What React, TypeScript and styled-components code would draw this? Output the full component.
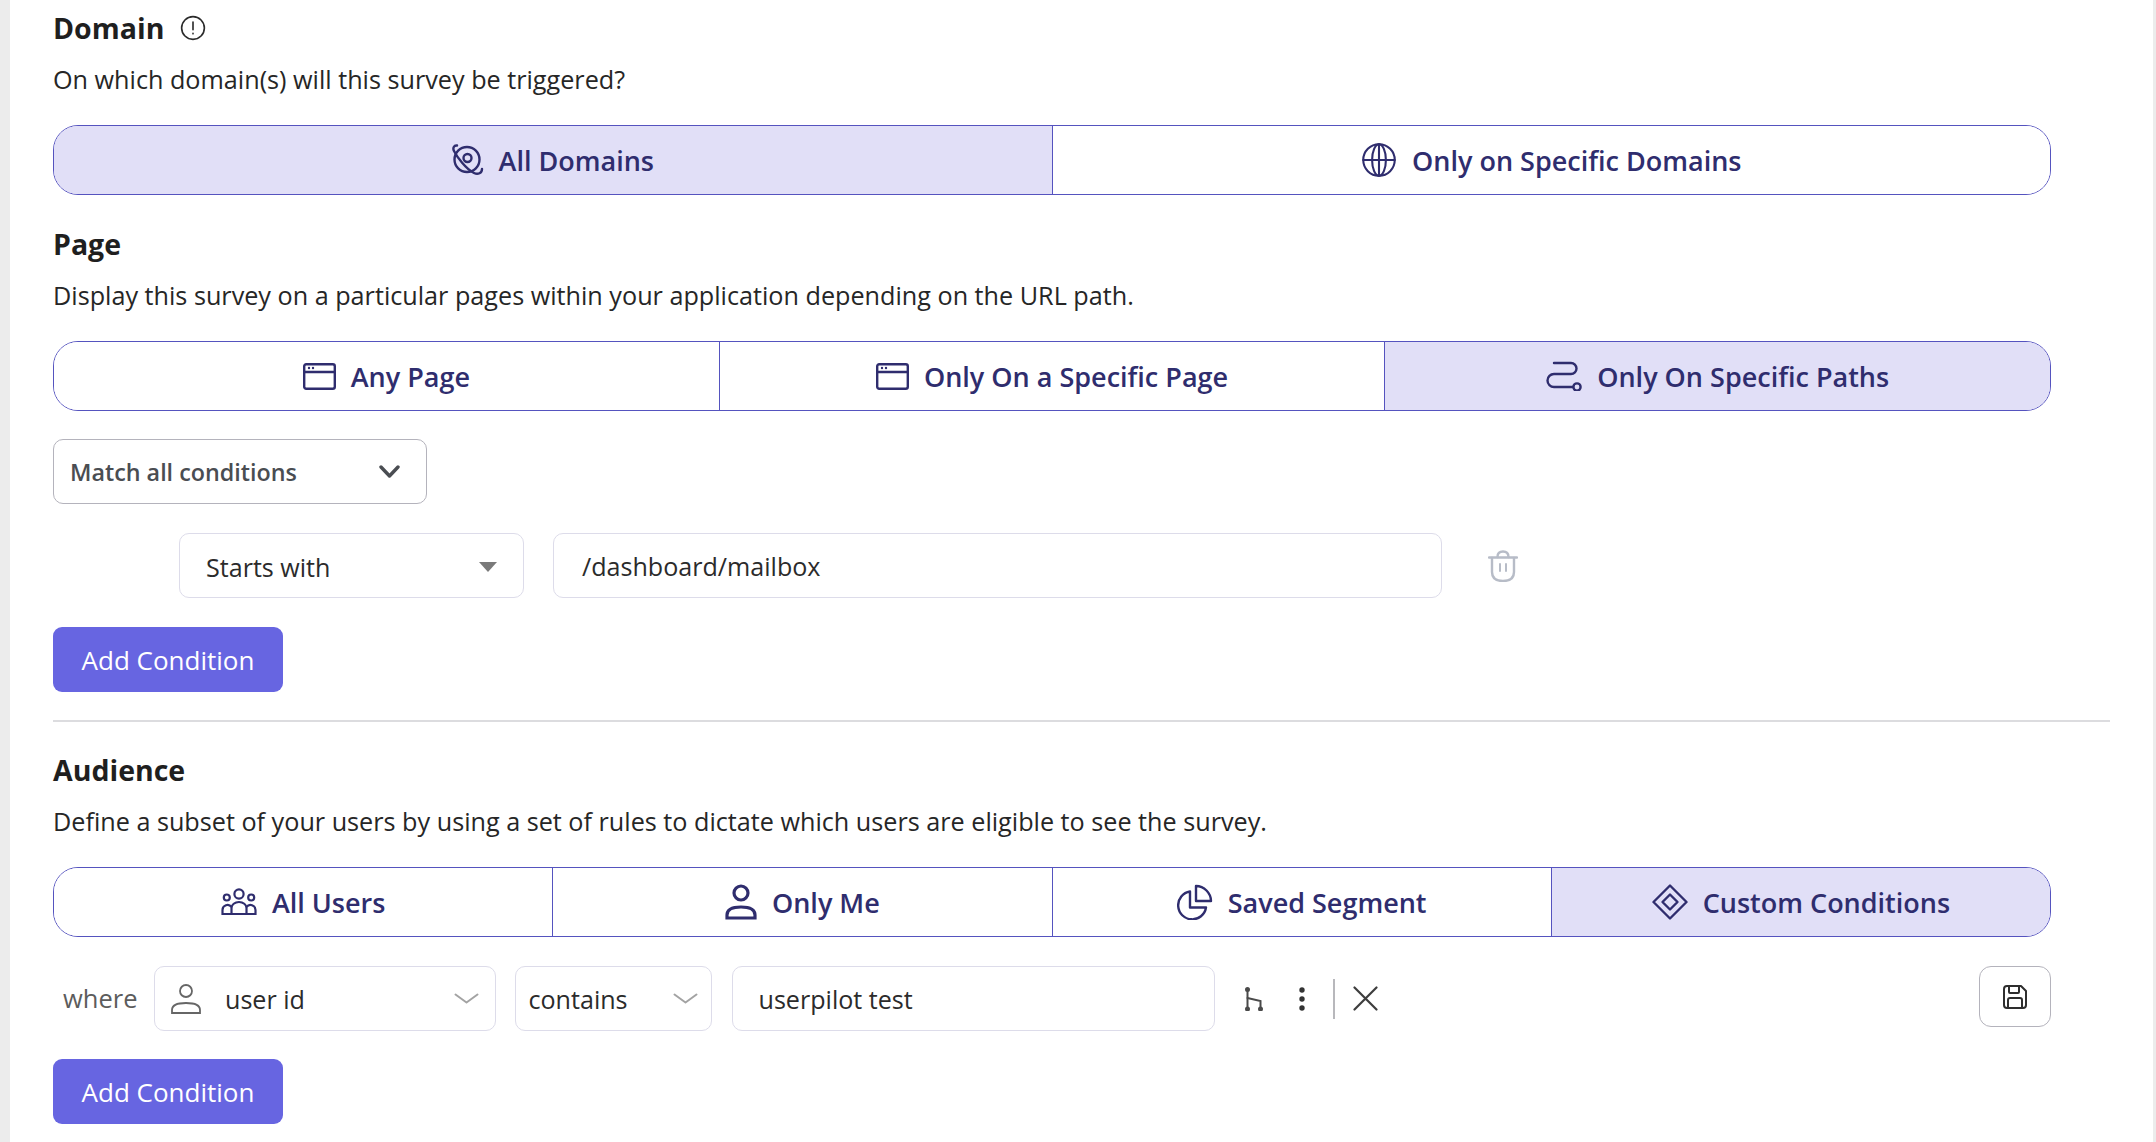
import React from "react";
import styled, { createGlobalStyle } from "styled-components";

const GlobalStyle = createGlobalStyle`
  html, body {
    margin: 0;
    padding: 0;
    background: #fff;
    font-family: "Open Sans", "Liberation Sans", sans-serif;
  }
`;

const NAVY = "#2f2d6e";

const Page = styled.div`
  width: 2156px;
  height: 1142px;
  overflow: hidden;
  box-sizing: border-box;
  background: #fff;
  border-left: 10px solid #ececec;
  border-right: 3px solid #ececec;
  padding: 8px 33px 0 43px;
`;

const Section = styled.section`
  width: 2057px;
  display: flex;
  flex-direction: column;
  align-items: flex-start;
`;

const TitleRow = styled.div`
  display: flex;
  align-items: center;
  gap: 16px;
  height: 40px;
`;

const Title = styled.h2`
  margin: 0;
  font-size: 28.5px;
  line-height: 40px;
  font-weight: 700;
  color: #1f1f1f;
`;

const Description = styled.p`
  margin: 13px 0 28px;
  font-size: 25.2px;
  line-height: 36px;
  font-weight: 400;
  color: #262626;
`;

const SegmentGroup = styled.div`
  width: 1998px;
  height: 70px;
  box-sizing: border-box;
  display: flex;
  border: 1.5px solid #5553bf;
  border-radius: 25px;
  overflow: hidden;
  margin-bottom: 29px;
`;

const Segment = styled.div<{ $active?: boolean }>`
  flex: 1 1 0;
  display: flex;
  align-items: center;
  justify-content: center;
  gap: 15px;
  font-size: 27px;
  font-weight: 600;
  color: ${NAVY};
  background: ${(p) => (p.$active ? "#e1dff7" : "#fff")};
  & + & {
    border-left: 1.5px solid #5553bf;
  }
`;

const MatchSelect = styled.div`
  width: 374px;
  height: 65px;
  box-sizing: border-box;
  margin: -1px 0 29px;
  padding: 0 26px 0 16px;
  display: flex;
  align-items: center;
  justify-content: space-between;
  border: 1.5px solid #b4b3bc;
  border-radius: 10px;
  font-size: 23.3px;
  font-weight: 600;
  color: #4a4d52;
`;

const ConditionRow = styled.div<{ $indent?: number; $bottom: number }>`
  width: 1998px;
  display: flex;
  align-items: flex-start;
  margin-left: ${(p) => p.$indent ?? 0}px;
  margin-bottom: ${(p) => p.$bottom}px;
`;

const Field = styled.div<{ $width: number; $gap?: number; $pad?: number; $drop?: number }>`
  width: ${(p) => p.$width}px;
  height: 65px;
  flex: none;
  box-sizing: border-box;
  margin-right: ${(p) => p.$gap ?? 0}px;
  padding: ${(p) => p.$drop ?? 0}px ${(p) => p.$pad ?? 26}px 0;
  display: flex;
  align-items: center;
  justify-content: space-between;
  border: 1.5px solid #dddcea;
  border-radius: 10px;
  font-size: 25.1px;
  color: #2b2b2b;
  background: #fff;
`;

const FieldLabel = styled.span`
  display: flex;
  align-items: center;
  gap: 24px;
`;

const Caret = styled.span`
  width: 0;
  height: 0;
  border-left: 9px solid transparent;
  border-right: 9px solid transparent;
  border-top: 10px solid #7a7a7a;
`;

const IconButton = styled.div`
  height: 65px;
  display: flex;
  align-items: center;
`;

const AddButton = styled.button`
  width: 230px;
  height: 65px;
  padding: 0;
  border: none;
  border-radius: 9px;
  background: #6765e1;
  color: #fff;
  font-family: inherit;
  font-size: 26px;
  font-weight: 500;
`;

const Divider = styled.hr`
  width: 2057px;
  height: 2px;
  margin: 28px 0;
  border: none;
  background: #dcdcdf;
`;

const WhereLabel = styled.span`
  width: 101px;
  flex: none;
  box-sizing: border-box;
  padding-left: 10px;
  line-height: 64px;
  font-size: 25.5px;
  color: #5c5c5c;
`;

const Actions = styled.div`
  display: flex;
  align-items: center;
  height: 65px;
  margin-left: 30px;
`;

const Separator = styled.span`
  width: 2px;
  height: 40px;
  margin: 0 18px 0 28px;
  background: #b8b8bc;
`;

const DotsSlot = styled.span`
  margin-left: 36px;
  display: flex;
`;

const SaveButton = styled.div`
  width: 72px;
  height: 61px;
  box-sizing: border-box;
  margin-left: auto;
  display: flex;
  align-items: center;
  justify-content: center;
  border: 1.5px solid #b4b3bc;
  border-radius: 12px;
  background: #fff;
`;

const baseSvg = (size: number, color: string, sw = 1.8) => ({
  width: size,
  height: size,
  viewBox: "0 0 24 24",
  fill: "none",
  stroke: color,
  strokeWidth: sw,
  strokeLinecap: "round" as const,
  strokeLinejoin: "round" as const,
});

const InfoIcon = () => (
  <svg {...baseSvg(26, "#2b2b2b", 1.5)}>
    <circle cx="12" cy="12" r="10.5" />
    <path d="M12 6.5v7" />
    <path d="M12 17v.4" />
  </svg>
);

const OrbitIcon = () => (
  <svg width="32" height="32" viewBox="0 0 32 32" fill="none" stroke={NAVY} strokeWidth="2.4" strokeLinecap="round">
    <circle cx="15" cy="15.500" r="12.500" />
    <circle cx="15.500" cy="14" r="4" />
    <path d="M5 1.500C2 1 0.500 4 2 7C5 13 14 25 22 29C26 31 30 29 30 25" />
  </svg>
);

const GlobeIcon = () => (
  <svg {...baseSvg(36, NAVY, 1.4)}>
    <circle cx="12" cy="12" r="10.5" />
    <ellipse cx="12" cy="12" rx="4.6" ry="10.5" />
    <path d="M1.5 12h21" />
    <path d="M12 1.5v21" />
  </svg>
);

const WindowIcon = () => (
  <svg width="33" height="27" viewBox="0 0 33 27" fill="none">
    <rect x="1.2" y="1.2" width="30.6" height="24.6" rx="2" stroke={NAVY} strokeWidth="2.4" />
    <path d="M1.2 9h30.6" stroke={NAVY} strokeWidth="2.4" />
    <circle cx="6" cy="5" r="1.2" fill={NAVY} />
    <circle cx="10" cy="5" r="1.2" fill={NAVY} />
  </svg>
);

const PathIcon = () => (
  <svg width="36" height="30" viewBox="0 0 36 30" fill="none" stroke={NAVY} strokeWidth="2.4" strokeLinecap="round">
    <path d="M8 2h17a5.5 5.5 0 0 1 0 11H8a5.5 5.5 0 0 0 0 13h19" />
    <circle cx="31" cy="26" r="3.6" />
  </svg>
);

const UsersIcon = () => (
  <svg width="36" height="28" viewBox="0 0 36 28" fill="none" stroke={NAVY} strokeWidth="2.2">
    <circle cx="18" cy="6" r="4.6" />
    <circle cx="5.8" cy="9.5" r="3" />
    <circle cx="30.2" cy="9.5" r="3" />
    <path d="M10.5 26v-6a7.5 6 0 0 1 15 0v6z" />
    <path d="M10.5 26H1.5v-4a5 5 0 0 1 9-3" />
    <path d="M25.5 26h9v-4a5 5 0 0 0-9-3" />
  </svg>
);

const UserIcon = () => (
  <svg width="32" height="36" viewBox="0 0 32 36" fill="none" stroke={NAVY} strokeWidth="3.2">
    <circle cx="16" cy="9" r="7" />
    <path d="M2 34v-3c0-5 5-8 14-8s14 3 14 8v3z" />
  </svg>
);

const FieldUserIcon = () => (
  <svg width="30" height="30" viewBox="0 0 30 30" fill="none" stroke="#666" strokeWidth="1.8">
    <circle cx="15" cy="7" r="6" />
    <path d="M1 29v-3c0-5 5-7 14-7s14 2 14 7v3z" />
  </svg>
);

const PieIcon = () => (
  <svg width="36" height="36" viewBox="0 0 36 36" fill="none" stroke={NAVY} strokeWidth="2.4" strokeLinejoin="round">
    <path d="M13 7.5a14 14 0 1 0 16 16H13z" />
    <path d="M19 2v15h15C34 9 27 2 19 2z" />
  </svg>
);

const DiamondIcon = () => (
  <svg width="36" height="36" viewBox="0 0 36 36" fill="none" stroke={NAVY} strokeWidth="2.4" strokeLinejoin="round">
    <path d="M18 1.5L34.5 18 18 34.5 1.5 18z" />
    <path d="M18 10.5L25.5 18 18 25.5 10.5 18z" />
  </svg>
);

const BoldChevronIcon = () => (
  <svg width="21" height="13" viewBox="0 0 21 13" fill="none" stroke="#4a4d52" strokeWidth="3.4" strokeLinecap="round" strokeLinejoin="round">
    <path d="M2 2l8.500 9L19 2" />
  </svg>
);

const FlatChevronIcon = () => (
  <svg width="25" height="11" viewBox="0 0 25 11" fill="none" stroke="#a3a3a3" strokeWidth="2" strokeLinecap="round" strokeLinejoin="round">
    <path d="M1.500 1.500l11 8 11-8" />
  </svg>
);

const TrashIcon = () => (
  <svg width="30" height="32" viewBox="0 0 30 32" fill="none" stroke="#b7bcc7" strokeWidth="2.4" strokeLinecap="round">
    <path d="M1 7.5h28" />
    <path d="M9.5 7c0-3.5 2-5.5 5.5-5.5S20.500 3.500 20.500 7" />
    <path d="M4 8v14c0 6 4 9 11 9s11-3 11-9V8" />
    <path d="M12 14v7M18 14v7" strokeWidth="2" />
  </svg>
);

const BranchIcon = () => (
  <svg width="18" height="24" viewBox="0 0 18 24" fill="none" stroke="#4a4a4a" strokeWidth="2" strokeLinecap="round">
    <path d="M2.500 2v20" />
    <path d="M2.500 11l13 3v8" />
    <circle cx="2.500" cy="2.500" r="1.500" fill="#4a4a4a" />
    <circle cx="2.500" cy="22" r="1.500" fill="#4a4a4a" />
    <circle cx="15.500" cy="22" r="1.500" fill="#4a4a4a" />
  </svg>
);

const DotsIcon = () => (
  <svg width="6" height="24" viewBox="0 0 6 24" fill="#333">
    <circle cx="3" cy="3" r="2.700" />
    <circle cx="3" cy="12" r="2.700" />
    <circle cx="3" cy="21" r="2.700" />
  </svg>
);

const CloseIcon = () => (
  <svg width="25" height="25" viewBox="0 0 25 25" stroke="#3d3d3d" strokeWidth="2.200" strokeLinecap="round">
    <path d="M1.500 1.500l22 22M23.500 1.500l-22 22" />
  </svg>
);

const SaveIcon = () => (
  <svg width="26" height="26" viewBox="0 0 26 26" fill="none" stroke="#2e2e2e" strokeWidth="2" strokeLinejoin="round">
    <path d="M2 5a3 3 0 0 1 3-3h14l5 5v14a3 3 0 0 1-3 3H5a3 3 0 0 1-3-3z" />
    <path d="M7 2v6a1 1 0 0 0 1 1h8a1 1 0 0 0 1-1V2" />
    <path d="M6 24v-8a2 2 0 0 1 2-2h10a2 2 0 0 1 2 2v8" />
  </svg>
);

const App = () => (
  <>
    <GlobalStyle />
    <Page>
      <Section>
        <TitleRow>
          <Title>Domain</Title>
          <InfoIcon />
        </TitleRow>
        <Description>On which domain(s) will this survey be triggered?</Description>
        <SegmentGroup>
          <Segment $active>
            <OrbitIcon />
            All Domains
          </Segment>
          <Segment>
            <GlobeIcon />
            Only on Specific Domains
          </Segment>
        </SegmentGroup>
      </Section>

      <Section>
        <TitleRow>
          <Title>Page</Title>
        </TitleRow>
        <Description>Display this survey on a particular pages within your application depending on the URL path.</Description>
        <SegmentGroup>
          <Segment>
            <WindowIcon />
            Any Page
          </Segment>
          <Segment>
            <WindowIcon />
            Only On a Specific Page
          </Segment>
          <Segment $active>
            <PathIcon />
            Only On Specific Paths
          </Segment>
        </SegmentGroup>
        <MatchSelect>
          Match all conditions
          <BoldChevronIcon />
        </MatchSelect>
        <ConditionRow $indent={126} $bottom={29}>
          <Field $width={345} $gap={29} $drop={2}>
            Starts with
            <Caret />
          </Field>
          <Field $width={889} $gap={46} $pad={28}>/dashboard/mailbox</Field>
          <IconButton>
            <TrashIcon />
          </IconButton>
        </ConditionRow>
        <AddButton>Add Condition</AddButton>
      </Section>

      <Divider />

      <Section>
        <TitleRow>
          <Title>Audience</Title>
        </TitleRow>
        <Description>Define a subset of your users by using a set of rules to dictate which users are eligible to see the survey.</Description>
        <SegmentGroup>
          <Segment>
            <UsersIcon />
            All Users
          </Segment>
          <Segment>
            <UserIcon />
            Only Me
          </Segment>
          <Segment>
            <PieIcon />
            Saved Segment
          </Segment>
          <Segment $active>
            <DiamondIcon />
            Custom Conditions
          </Segment>
        </SegmentGroup>
        <ConditionRow $bottom={28}>
          <WhereLabel>where</WhereLabel>
          <Field $width={341.5} $gap={19} $pad={16}>
            <FieldLabel>
              <FieldUserIcon />
              user id
            </FieldLabel>
            <FlatChevronIcon />
          </Field>
          <Field $width={197.5} $gap={19.5} $pad={13}>
            contains
            <FlatChevronIcon />
          </Field>
          <Field $width={483} $pad={26}>userpilot test</Field>
          <Actions>
            <BranchIcon />
            <DotsSlot>
              <DotsIcon />
            </DotsSlot>
            <Separator />
            <CloseIcon />
          </Actions>
          <SaveButton>
            <SaveIcon />
          </SaveButton>
        </ConditionRow>
        <AddButton>Add Condition</AddButton>
      </Section>
    </Page>
  </>
);

export default App;
